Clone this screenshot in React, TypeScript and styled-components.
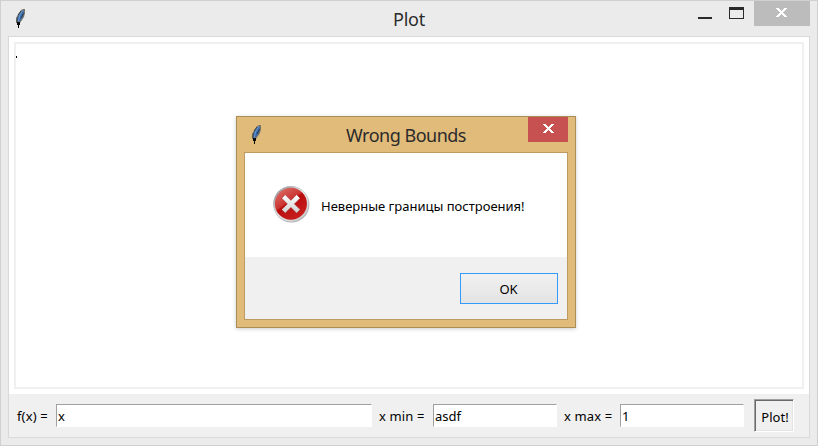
import React from "react";
import styled, { createGlobalStyle } from "styled-components";

const GlobalStyle = createGlobalStyle`
  *, *::before, *::after { box-sizing: border-box; }
  body { margin: 0; overflow: hidden; background: #ebebeb; }
`;

const Window = styled.main`
  position: relative;
  display: flex;
  flex-direction: column;
  width: 818px;
  height: 446px;
  padding: 0 7px 8px;
  background: #ebebeb;
  border: 1px solid #d0d0d0;
  font-family: "Noto Sans", "Open Sans", sans-serif;
  font-size: 13px;
  color: #000;
`;

const TitleBar = styled.header`
  display: grid;
  grid-template-columns: 1fr auto 1fr;
  height: 35px;
  flex: none;
`;

const TitleIcon = styled.div`
  padding: 8px 0 0 7px;
  line-height: 0;
`;

const Title = styled.h1<{ $spacing: number }>`
  margin: 0;
  padding-top: 6px;
  font-size: 18px;
  font-weight: 400;
  line-height: 24px;
  letter-spacing: ${(p) => p.$spacing}px;
  color: #2b2b2b;
  white-space: nowrap;
`;

const Controls = styled.div`
  display: flex;
  justify-content: flex-end;
`;

const ControlButton = styled.button<{ $width: number; $left: number; $bg?: string }>`
  display: flex;
  align-items: flex-start;
  width: ${(p) => p.$width}px;
  height: 25px;
  padding: 6px 0 0 ${(p) => p.$left}px;
  border: 0;
  background: ${(p) => p.$bg ?? "transparent"};

  svg { flex: none; }
`;

const Client = styled.section`
  display: flex;
  flex-direction: column;
  width: 802px;
  height: 402px;
  border: 1px solid #d9d9d9;
  background: #f0f0f0;
`;

const PlotArea = styled.div`
  height: 357px;
  padding: 5px;
  background: #fff;
`;

const Canvas = styled.div`
  height: 347px;
  border: 2px solid #f0f0f0;
  padding-top: 12px;
`;

const Point = styled.div`
  width: 1px;
  height: 2px;
  background: #000;
`;

const Form = styled.form`
  display: flex;
  height: 43px;
  padding: 10px 0 0 8px;
`;

const Label = styled.label<{ $width: number; $indent?: number }>`
  width: ${(p) => p.$width}px;
  padding-left: ${(p) => p.$indent ?? 0}px;
  line-height: 24px;
  letter-spacing: 0.15px;
  white-space: pre;
`;

const Entry = styled.input<{ $width: number }>`
  width: ${(p) => p.$width}px;
  height: 23px;
  padding: 0 0 0 1px;
  border: 1px solid #fff;
  border-top-color: #a0a0a0;
  border-left-color: #a0a0a0;
  border-radius: 0;
  outline: 0;
  background: #fff;
  font: inherit;
  color: #000;
`;

const PlotButton = styled.button`
  width: 40px;
  height: 33px;
  margin: -5px 0 0 10px;
  padding: 3px 0 0 2px;
  border: 1px solid #fff;
  border-top-color: #a0a0a0;
  border-left-color: #a0a0a0;
  box-shadow: inset 1px 1px #696969, inset -1px -1px #e3e3e3;
  background: #f0f0f0;
  font: inherit;
  color: #000;
  white-space: nowrap;
`;

const Dialog = styled.section`
  position: absolute;
  left: 235px;
  top: 115px;
  width: 340px;
  height: 212px;
  padding: 0 7px 7px;
  border: 1px solid #ad8d57;
  background: #e1bb7a;
  box-shadow: 0 1px 4px rgba(0, 0, 0, 0.2);
`;

const DialogBody = styled.div`
  display: flex;
  flex-direction: column;
  height: 168px;
  border: 1px solid #bc9a60;
`;

const Message = styled.div`
  display: flex;
  height: 104px;
  padding: 32px 0 0 27px;
  background: #fff;
`;

const MessageText = styled.p`
  margin: 0;
  padding: 9px 0 0 11px;
  line-height: 24px;
  white-space: nowrap;
`;

const DialogFooter = styled.footer`
  display: flex;
  flex: 1;
  justify-content: flex-end;
  padding: 16px 9px 0 0;
  background: #f0f0f0;
`;

const OkButton = styled.button`
  width: 98px;
  height: 31px;
  padding: 0 1px 0 0;
  border: 1px solid #3399ff;
  background: linear-gradient(#f0f0f0, #e4e4e4);
  font: inherit;
  color: #000;
`;

const Feather = () => (
  <svg width="11" height="19" viewBox="0 0 11 19">
    <path d="M8 0h2v4L9 8l-2 3-2 3H1v-3l1-4 2-3 2-3z" fill="#77746b" />
    <path d="M7 2h2L8 7l-2 4-3 2-1-3 2-5z" fill="#3769ad" />
    <path d="M8 1L5 6 3 13" stroke="#6c9bcd" fill="none" />
    <path d="M6 2L3 6M9 4L6 9M2 8v5" stroke="#25282b" strokeWidth=".7" fill="none" />
    <path d="M2 13h3v3H4v3H3v-3H2z" fill="#080808" />
  </svg>
);

const Cross = () => (
  <svg width="11" height="11" viewBox="0 0 11 11" shapeRendering="crispEdges">
    <path d="M0 1h3v1h1v1h1v1h1V3h1V2h1V1h3v1h-1v1H9v1H8v1H7v1h1v1h1v1h1v1h1v1H8V9H7V8H6V7H5v1H4v1H3v1H0V9h1V8h1V7h1V6h1V5H3V4H2V3H1V2H0z" fill="#fff" />
  </svg>
);

const Minimize = () => (
  <svg width="14" height="13" viewBox="0 0 14 13">
    <path d="M0 10h14v2H0z" fill="#2a2a2a" />
  </svg>
);

const Maximize = () => (
  <svg width="15" height="12" viewBox="0 0 15 12">
    <path d="M0 0h15v12H0zM1 3v8h13V3z" fillRule="evenodd" fill="#2a2a2a" />
  </svg>
);

const ErrorIcon = () => (
  <svg width="38" height="38" viewBox="0 0 38 38">
    <defs>
      <linearGradient id="rim" x1="0" y1="0" x2="1" y2="1">
        <stop stopColor="#858585" />
        <stop offset=".5" stopColor="#e6e6e6" />
        <stop offset="1" stopColor="#c4c4c4" />
      </linearGradient>
      <linearGradient id="red" x1="0" y1="0" x2=".7" y2="1">
        <stop stopColor="#df7a73" />
        <stop offset=".48" stopColor="#cb3431" />
        <stop offset=".52" stopColor="#b80c0c" />
        <stop offset="1" stopColor="#c9211f" />
      </linearGradient>
      <linearGradient id="mark" x1="0" y1="0" x2="0" y2="1">
        <stop stopColor="#fff" />
        <stop offset="1" stopColor="#d0d0d0" />
      </linearGradient>
    </defs>
    <circle cx="19.4" cy="19.5" r="18" fill="#8c8c8c" opacity=".65" />
    <circle cx="18.9" cy="18.8" r="17.7" fill="url(#rim)" />
    <circle cx="18.9" cy="18.8" r="16" fill="url(#red)" />
    <path d="M13.2 9.6l5.7 5.7 5.7-5.7 3.6 3.6-5.7 5.7 5.7 5.7-3.6 3.6-5.7-5.7-5.7 5.7-3.6-3.6 5.7-5.7-5.7-5.7z" fill="url(#mark)" stroke="#9f1714" strokeWidth=".6" />
  </svg>
);

export default function App() {
  return (
    <>
      <GlobalStyle />
      <Window>
        <TitleBar>
          <TitleIcon><Feather /></TitleIcon>
          <Title $spacing={-0.2}>Plot</Title>
          <Controls>
            <ControlButton $width={32} $left={9} aria-label="Minimize"><Minimize /></ControlButton>
            <ControlButton $width={33} $left={8} aria-label="Maximize"><Maximize /></ControlButton>
            <ControlButton $width={56} $left={22} $bg="#bcbcbc" aria-label="Close"><Cross /></ControlButton>
          </Controls>
        </TitleBar>
        <Client>
          <PlotArea><Canvas><Point /></Canvas></PlotArea>
          <Form onSubmit={(e) => e.preventDefault()}>
            <Label $width={39}>f(x) =</Label>
            <Entry $width={316} defaultValue="x" />
            <Label $width={61} $indent={7}>x min =</Label>
            <Entry $width={124} defaultValue="asdf" />
            <Label $width={63} $indent={7}>x max =</Label>
            <Entry $width={124} defaultValue="1" />
            <PlotButton type="submit">Plot!</PlotButton>
          </Form>
        </Client>
        <Dialog role="dialog">
          <TitleBar>
            <TitleIcon><Feather /></TitleIcon>
            <Title $spacing={-0.5}>Wrong Bounds</Title>
            <Controls>
              <ControlButton $width={40} $left={15} $bg="#c75050" aria-label="Close"><Cross /></ControlButton>
            </Controls>
          </TitleBar>
          <DialogBody>
            <Message>
              <ErrorIcon />
              <MessageText>Неверные границы построения!</MessageText>
            </Message>
            <DialogFooter><OkButton>OK</OkButton></DialogFooter>
          </DialogBody>
        </Dialog>
      </Window>
    </>
  );
}
